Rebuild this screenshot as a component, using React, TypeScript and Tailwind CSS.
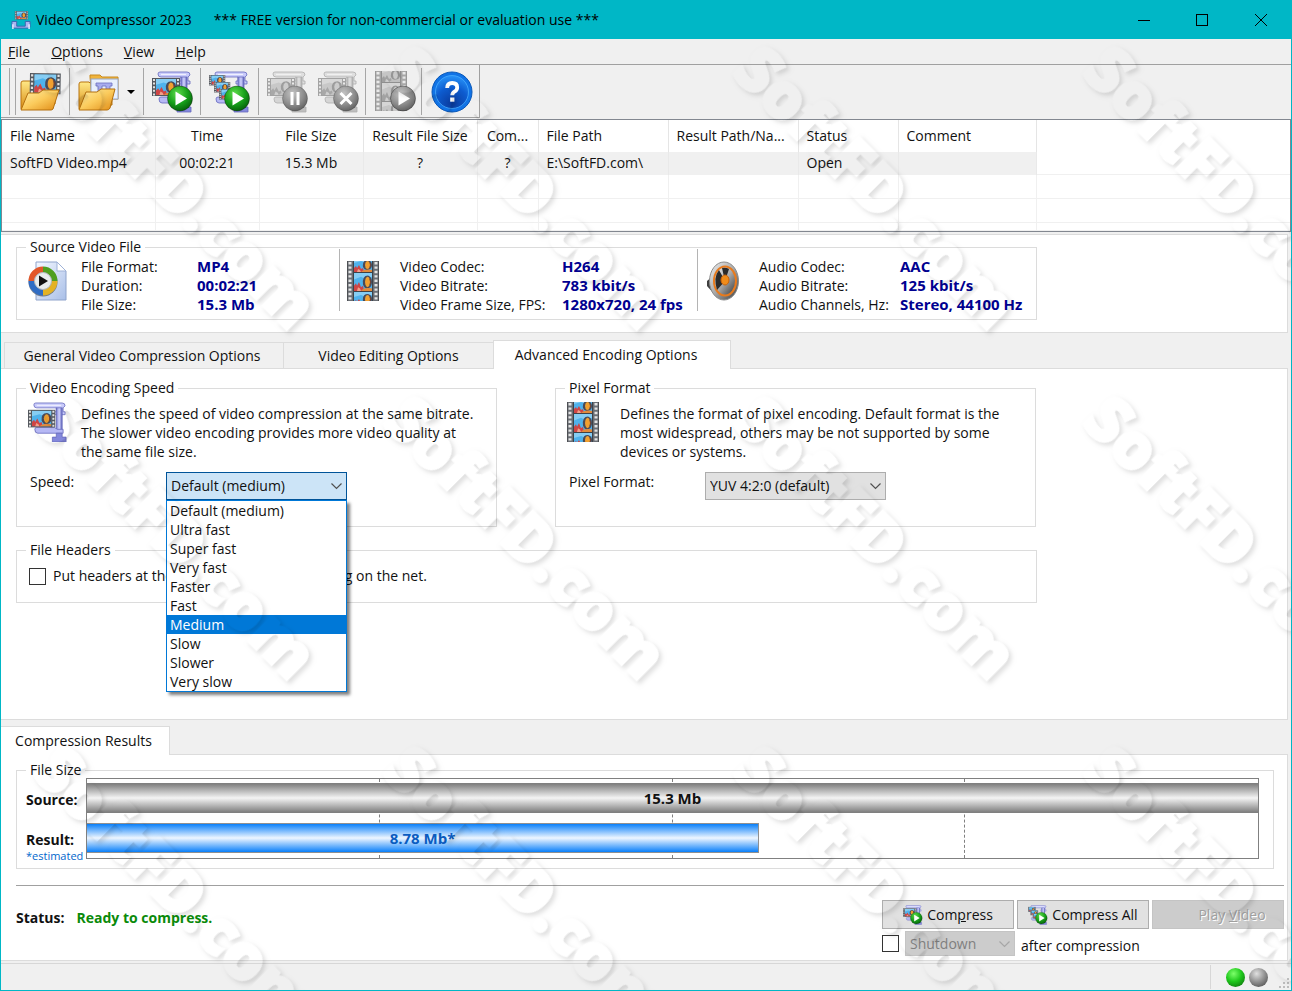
import React from 'react';

const columns = [
  { title: 'File Name', value: 'SoftFD Video.mp4', width: 'w-[153px]', align: 'text-left' },
  { title: 'Time', value: '00:02:21', width: 'w-[104px]', align: 'text-center' },
  { title: 'File Size', value: '15.3 Mb', width: 'w-[104px]', align: 'text-center' },
  { title: 'Result File Size', value: '?', width: 'w-[114px]', align: 'text-center' },
  { title: 'Com...', value: '?', width: 'w-[61px]', align: 'text-center' },
  { title: 'File Path', value: 'E:\\SoftFD.com\\', width: 'w-[130px]', align: 'text-left' },
  { title: 'Result Path/Na...', value: '', width: 'w-[130px]', align: 'text-left' },
  { title: 'Status', value: 'Open', width: 'w-[100px]', align: 'text-left' },
  { title: 'Comment', value: '', width: 'w-[138px]', align: 'text-left' },
];

const speeds = [
  'Default (medium)',
  'Ultra fast',
  'Super fast',
  'Very fast',
  'Faster',
  'Fast',
  'Medium',
  'Slow',
  'Slower',
  'Very slow',
];

const emptyRows = ['h-6', 'h-6', 'h-2'];

// shared gradients for all icons
const IconDefs: React.FC = () => (
  <svg className="absolute w-0 h-0" aria-hidden="true">
    <defs>
      <linearGradient id="folder" x1="0" y1="0" x2="1" y2="1">
        <stop offset="0" stopColor="#fff0a8" />
        <stop offset="0.5" stopColor="#fbcb5c" />
        <stop offset="1" stopColor="#e08a14" />
      </linearGradient>
      <linearGradient id="folderBack" x1="0" y1="0" x2="0" y2="1">
        <stop offset="0" stopColor="#ffe987" />
        <stop offset="1" stopColor="#d98b12" />
      </linearGradient>
      <radialGradient id="greenBall" cx="0.4" cy="0.3" r="0.75">
        <stop offset="0" stopColor="#5fdc4b" />
        <stop offset="0.55" stopColor="#17a01a" />
        <stop offset="1" stopColor="#045c08" />
      </radialGradient>
      <radialGradient id="grayBall" cx="0.4" cy="0.3" r="0.75">
        <stop offset="0" stopColor="#c4c4c4" />
        <stop offset="0.6" stopColor="#8c8c8c" />
        <stop offset="1" stopColor="#5c5c5c" />
      </radialGradient>
      <radialGradient id="blueBall" cx="0.5" cy="0.85" r="0.9">
        <stop offset="0" stopColor="#0a3a9c" />
        <stop offset="0.55" stopColor="#0d5cd0" />
        <stop offset="1" stopColor="#2b9bff" />
      </radialGradient>
      <linearGradient id="clamp" x1="0" y1="0" x2="1" y2="0">
        <stop offset="0" stopColor="#7478cc" />
        <stop offset="0.5" stopColor="#d4d6ff" />
        <stop offset="1" stopColor="#5c60b8" />
      </linearGradient>
      <linearGradient id="page" x1="0" y1="0" x2="1" y2="1">
        <stop offset="0" stopColor="#f4f8ff" />
        <stop offset="1" stopColor="#a9bfe8" />
      </linearGradient>
      <linearGradient id="metal" x1="0" y1="0" x2="1" y2="1">
        <stop offset="0" stopColor="#f2f2f2" />
        <stop offset="0.5" stopColor="#a8a8a8" />
        <stop offset="1" stopColor="#3c3c3c" />
      </linearGradient>
    </defs>
  </svg>
);

// 18x14 picture of the balloon and the rocks
const Picture: React.FC = () => (
  <g>
    <rect width="18" height="14" fill="#4fb2ec" />
    <path d="M0 0h18v3l-6 2-5-2-7 2z" fill="#86cdf3" />
    <path d="M0 14V10l2-2 1 2 2-3 2 4 2-1 1 4z" fill="#cf4545" />
    <path d="M3 14l1-3 2 1 1 2z" fill="#f0a08a" />
    <path d="M9 9q-1-7 5-7 4 1 4 5t-4 5q-3 1-5-3z" fill="#4a4a58" />
    <path d="M13 3q3 0 3 4t-3 4q-2-1-2-4t2-4z" fill="#f0a030" />
    <path d="M15 4q2 3 0 6 2-1 2-3t-2-3z" fill="#7a4430" />
    <path d="M7 14c2-2 5-3 11-2v2z" fill="#e08a3c" />
  </g>
);

const FilmStrip: React.FC = () => (
  <g>
    <rect width="32" height="40" fill="#6a6e74" />
    <path d="M3 1v39M29 1v39" stroke="#e4e4e4" strokeWidth="3" strokeDasharray="2.4 2" />
    <rect x="0" width="1" height="40" fill="#4e5054" />
    <rect x="31" width="1" height="40" fill="#4e5054" />
    <rect x="6" y="0" width="20" height="40" fill="#3e4248" />
    <svg x="7" y="0" width="18" height="11" viewBox="0 3 18 11"><Picture /></svg>
    <svg x="7" y="12" width="18" height="18" viewBox="0 0 18 14" preserveAspectRatio="none"><Picture /></svg>
    <svg x="7" y="31" width="18" height="9" viewBox="0 0 18 9"><Picture /></svg>
  </g>
);

const WideFrame: React.FC = () => (
  <g>
    <rect width="28" height="18" fill="#54585e" />
    <path d="M2 1v17M26 1v17" stroke="#e2e2e2" strokeWidth="2" strokeDasharray="2 1.6" />
    <svg x="4" y="1" width="20" height="16" viewBox="0 0 18 14" preserveAspectRatio="none"><Picture /></svg>
  </g>
);

const Clamp: React.FC = () => (
  <g stroke="#6468bc" strokeWidth="0.8">
    <path d="M6 3q0-2 2-2h27q3 0 3 3l-2 2v4h2v3H27v-3h2V6H9Q6 6 6 3z" fill="#c9cbfb" />
    <rect x="29" y="6" width="6" height="24" fill="url(#clamp)" />
    <path d="M7 28q0-2 2-2h18l3 2h6v4H10q-3 0-3-4z" fill="#b6b8f4" />
    <path d="M29 32h6v4h4v5H25v-5h4z" fill="#8488dc" />
    <path d="M9 3.4h25" stroke="#fff" />
  </g>
);

const FilmStripIcon: React.FC = () => (
  <svg width="32" height="40" viewBox="0 0 32 40" aria-hidden="true"><FilmStrip /></svg>
);

const ClampIcon: React.FC = () => (
  <svg width="40" height="40" viewBox="0 0 41 41" aria-hidden="true">
    <Clamp />
    <g transform="translate(0 8)"><WideFrame /></g>
  </svg>
);

const PlayBadge: React.FC<{ fill?: string }> = ({ fill = 'url(#greenBall)' }) => (
  <g>
    <circle cx="28" cy="27.5" r="12.5" fill={fill} stroke="#00000055" />
    <path d="M23.5 20.5v14L35 27.5z" fill="#fff" />
  </g>
);

const OpenFileIcon: React.FC = () => (
  <svg width="42" height="40" viewBox="0 0 42 40" aria-hidden="true">
    <path d="M1 37V11q0-2 2-2h8l2 3h22v20z" fill="url(#folderBack)" stroke="#b87410" />
    <g transform="translate(10 1) rotate(1) scale(1.1 1.15)"><WideFrame /></g>
    <path d="M1 38l7-17h11l4-3h16l-6 19q-1 1-2 1z" fill="url(#folder)" stroke="#b4700e" />
  </svg>
);

const OpenFolderIcon: React.FC = () => (
  <svg width="42" height="40" viewBox="0 0 42 40" aria-hidden="true">
    <path d="M1 37V12q0-2 2-2h8l3 3h20v20z" fill="url(#folderBack)" stroke="#b87410" />
    <path d="M12 5V3h10l2 2h16v22H14z" fill="#f0b43c" stroke="#c98a1c" />
    <rect x="13" y="7" width="27" height="20" fill="#e8f0fd" stroke="#94a8cc" />
    <path d="M18 11h16v3h-2v7h-4v-7h-4v6h-4v-6h-2z" fill="#a8acee" stroke="#6a6ec0" strokeWidth="0.8" />
    <path d="M1 38l7-18h11l4-3h14l-5 19q-1 2-3 2z" fill="url(#folder)" stroke="#b4700e" />
  </svg>
);

const CompressIcon: React.FC<{ size?: number }> = ({ size = 42 }) => (
  <svg width={size} height={size} viewBox="0 0 42 42" aria-hidden="true">
    <Clamp />
    <g transform="translate(0 7)"><WideFrame /></g>
    <PlayBadge />
  </svg>
);

const CompressAllIcon: React.FC<{ size?: number }> = ({ size = 42 }) => (
  <svg width={size} height={size} viewBox="0 0 42 42" aria-hidden="true">
    <Clamp />
    <g transform="translate(0 4) scale(.58)"><WideFrame /></g>
    <g transform="translate(5 11) scale(.58)"><WideFrame /></g>
    <g transform="translate(10 18) scale(.58)"><WideFrame /></g>
    <PlayBadge />
  </svg>
);

const GrayClamp: React.FC<{ children: React.ReactNode }> = ({ children }) => (
  <svg width="42" height="42" viewBox="0 0 42 42" aria-hidden="true" className="grayscale">
    <g opacity="0.5">
      <Clamp />
      <g transform="translate(0 7)"><WideFrame /></g>
    </g>
    <circle cx="28" cy="27.5" r="12.5" fill="url(#grayBall)" stroke="#00000033" />
    {children}
  </svg>
);

const PauseIcon: React.FC = () => (
  <GrayClamp>
    <path d="M25 21v13M31 21v13" stroke="#fff" strokeWidth="3" />
  </GrayClamp>
);

const StopIcon: React.FC = () => (
  <GrayClamp>
    <path d="M22.5 22l11 11m0-11l-11 11" stroke="#fff" strokeWidth="3" />
  </GrayClamp>
);

const PlayFilmIcon: React.FC = () => (
  <svg width="42" height="42" viewBox="0 0 42 42" aria-hidden="true" className="grayscale">
    <g opacity="0.55"><FilmStrip /></g>
    <PlayBadge fill="url(#grayBall)" />
  </svg>
);

const HelpIcon: React.FC = () => (
  <svg width="42" height="42" viewBox="0 0 42 42" aria-hidden="true">
    <circle cx="21" cy="21" r="20" fill="#1173e6" stroke="#0a58b8" />
    <circle cx="21" cy="21" r="16.5" fill="url(#blueBall)" stroke="#4fb0ff" strokeOpacity="0.7" />
    <path d="M16.2 17q0-5 5-5t5 4.4q0 2.6-2.7 4.2-2.200 1.300-2.200 3.600" fill="none" stroke="#fff" strokeWidth="3.8" />
    <rect x="19.2" y="26.5" width="4.2" height="4.2" fill="#fff" />
  </svg>
);

const MediaFileIcon: React.FC = () => (
  <svg width="40" height="40" viewBox="0 0 40 40" aria-hidden="true">
    <path d="M8 1h21l9 9v29H8z" fill="url(#page)" stroke="#8fa4cc" />
    <path d="M29 1v9h9z" fill="#fff" stroke="#9fb2d8" />
    <circle cx="15" cy="21" r="14.5" fill="#4b5563" opacity="0.7" />
    <g fill="none" strokeWidth="6">
      <path d="M3.5 20A11.5 11.5 0 0 1 15 8.5" stroke="#e2572a" />
      <path d="M15 8.5A11.5 11.5 0 0 1 26.5 20" stroke="#4f9f1f" />
      <path d="M26.5 20A11.5 11.5 0 0 1 15 31.5" stroke="#e3b224" />
      <path d="M15 31.5A11.5 11.5 0 0 1 3.5 20" stroke="#2f6cc4" />
    </g>
    <circle cx="15" cy="20" r="8.5" fill="#e8ecee" stroke="#b4b8bc" />
    <path d="M11 14.5v11l9-5.5z" fill="#111" />
  </svg>
);

const SpeakerIcon: React.FC = () => (
  <svg width="33" height="40" viewBox="0 0 33 40" aria-hidden="true">
    <path d="M8 14L1 20v5l8 9z" fill="#3f3f3f" />
    <ellipse cx="18" cy="20" rx="14.5" ry="19" fill="url(#metal)" stroke="#8c8c8c" />
    <ellipse cx="19" cy="20" rx="12" ry="15.5" fill="#e87a1c" />
    <ellipse cx="19" cy="20" rx="10" ry="13.5" fill="url(#metal)" />
    <path d="M19 20L13 9Q7 16 11 29zM19 20l-3-13q4-1 7 1z" fill="#2b2b2b" />
    <ellipse cx="19" cy="19" rx="4" ry="5" fill="#f08c1a" stroke="#c96208" />
  </svg>
);

const Chevron: React.FC<{ color?: string }> = ({ color = '#505050' }) => (
  <svg className="absolute right-1 top-1/2 -translate-y-1/2 pointer-events-none" width="13" height="8" viewBox="0 0 13 8" aria-hidden="true">
    <path d="M1.5 1.5l5 5 5-5" fill="none" stroke={color} strokeWidth="1.2" />
  </svg>
);

const Watermark: React.FC = () => (
  <svg className="absolute inset-x-0 top-[39px] w-full h-[calc(100%-39px)] pointer-events-none z-50" aria-hidden="true">
    <defs>
      <filter id="emboss" x="-10%" y="-30%" width="120%" height="170%">
        <feGaussianBlur in="SourceAlpha" stdDeviation="2" result="blur" />
        <feOffset in="blur" dx="4" dy="0" result="shadow" />
        <feComposite in="shadow" in2="SourceAlpha" operator="out" />
      </filter>
      <pattern id="tile" width="350" height="350" patternUnits="userSpaceOnUse">
        <g opacity="0.12" fontSize="63" fontWeight="800" fontFamily="Open Sans, sans-serif">
          <text transform="translate(29 34) rotate(45)" filter="url(#emboss)" stroke="#000" strokeWidth="3">
            SoftFD.com
          </text>
        </g>
      </pattern>
    </defs>
    <rect width="100%" height="100%" fill="url(#tile)" />
  </svg>
);

interface ToolButtonProps {
  label: string;
  className: string;
  disabled?: boolean;
  children: React.ReactNode;
}

const ToolButton: React.FC<ToolButtonProps> = ({ label, className, disabled, children }) => (
  <button type="button" aria-label={label} disabled={disabled} className={`flex items-center justify-center h-full pt-[2px] ${className}`}>
    {children}
  </button>
);

const Separator: React.FC = () => <div className="w-px h-[47px] bg-[#a6a6a6]" />;

interface InfoProps {
  icon: React.ReactNode;
  labels: string;
  className: string;
  rows: [string, string][];
}

const Info: React.FC<InfoProps> = ({ icon, labels, className, rows }) => (
  <div className={`flex items-start ${className}`}>
    <div className="w-[53px] pt-1">{icon}</div>
    <dl className={`grid ${labels} leading-[19px] whitespace-nowrap`}>
      {rows.map(([name, value]) => (
        <React.Fragment key={name}>
          <dt>{name}</dt>
          <dd className="font-bold text-[15px] text-[#000090]">{value}</dd>
        </React.Fragment>
      ))}
    </dl>
  </div>
);

const App: React.FC = () => {
  return (
    <div className="relative min-h-screen flex flex-col overflow-hidden bg-[#f0f0f0] border-x border-b border-[#00b7c6] text-sm leading-5 text-[#111] font-['Open_Sans',sans-serif]">
      <IconDefs />

      <header className="h-[39px] flex items-center bg-[#00b7c6] pl-[10px] text-black">
        <svg width="20" height="20" viewBox="0 0 42 42" aria-hidden="true">
          <path d="M2 24h10v10h18V24h10v12l-4 2H6l-4-2z" fill="#a9b6f0" stroke="#3c62b0" strokeWidth="2" />
          <g transform="translate(8 2)"><WideFrame /></g>
          <path d="M4 30v10M38 30v10" stroke="#e8ecff" strokeWidth="3" />
        </svg>
        <h1 className="flex-1 pl-[5px] flex gap-[22px] whitespace-pre">
          <span>Video Compressor 2023</span>
          <span>*** FREE version for non-commercial or evaluation use ***</span>
        </h1>
        <div className="flex pr-px">
          <button type="button" aria-label="Minimize" className="w-[58px] h-9 flex items-center justify-center">
            <svg width="12" height="12"><path d="M0 6.5h12" stroke="#000" /></svg>
          </button>
          <button type="button" aria-label="Maximize" className="w-[58px] h-9 flex items-center justify-center">
            <svg width="12" height="12"><rect x="0.5" y="0.5" width="11" height="11" fill="none" stroke="#000" /></svg>
          </button>
          <button type="button" aria-label="Close" className="w-[59px] h-9 flex items-center justify-center">
            <svg width="12" height="12"><path d="M0 0l12 12M12 0L0 12" stroke="#000" /></svg>
          </button>
        </div>
      </header>

      <nav className="h-[26px] flex items-center gap-[21px] pl-[7px] border-b border-[#a0a0a0]">
        <button type="button"><u>F</u>ile</button>
        <button type="button"><u>O</u>ptions</button>
        <button type="button"><u>V</u>iew</button>
        <button type="button"><u>H</u>elp</button>
      </nav>

      <div className="h-[54px] flex">
        <div className="h-[53px] flex items-center pl-2 border-b border-r border-[#a0a0a0]">
          <div className="w-[7px] h-[47px] border-x border-[#a6a6a6]" />
          <ToolButton label="Open file" className="w-[53px] pr-1"><OpenFileIcon /></ToolButton>
          <Separator />
          <ToolButton label="Open folder" className="w-[73px] gap-[7px]">
            <OpenFolderIcon />
            <svg width="8" height="4" aria-hidden="true"><path d="M0 0h8L4 4z" /></svg>
          </ToolButton>
          <Separator />
          <ToolButton label="Compress" className="w-14 pl-[2px]"><CompressIcon /></ToolButton>
          <Separator />
          <ToolButton label="Compress all" className="w-[57px]"><CompressAllIcon /></ToolButton>
          <Separator />
          <ToolButton label="Pause" className="w-[53px] pl-1" disabled><PauseIcon /></ToolButton>
          <ToolButton label="Stop" className="w-[53px]" disabled><StopIcon /></ToolButton>
          <Separator />
          <ToolButton label="Play" className="w-[55px] pl-1" disabled><PlayFilmIcon /></ToolButton>
          <Separator />
          <ToolButton label="Help" className="w-[57px] pl-[2px]"><HelpIcon /></ToolButton>
        </div>
      </div>

      <div className="h-[113px] bg-white border border-[#828790] overflow-hidden">
        <table className="w-full table-fixed border-collapse">
          <thead>
            <tr className="h-8">
              {columns.map((col) => (
                <th key={col.title} scope="col" className={`${col.width} ${col.align} px-2 font-normal border-r border-[#e5e5e5] whitespace-nowrap overflow-hidden`}>
                  {col.title}
                </th>
              ))}
              <td />
            </tr>
          </thead>
          <tbody>
            <tr className="h-[22px] border-b border-[#f0f0f0]">
              {columns.map((col) => (
                <td key={col.title} className={`${col.align} px-2 bg-[#f0f0f0] border-r border-[#e9e9e9] whitespace-nowrap`}>
                  {col.value}
                </td>
              ))}
              <td />
            </tr>
            {emptyRows.map((height, index) => (
              <tr key={index} className={`${height} border-b border-[#f0f0f0]`}>
                {columns.map((col) => (
                  <td key={col.title} className="border-r border-[#f0f0f0]" />
                ))}
                <td />
              </tr>
            ))}
          </tbody>
        </table>
      </div>

      <section className="mt-[2px] mr-[3px] h-[99px] bg-white border-y border-r border-[#dcdcdc] pl-[15px] pt-[2px]">
        <fieldset className="w-[1021px] h-[83px] border border-[#dcdcdc]">
          <legend className="ml-[9px] px-1">Source Video File</legend>
          <div className="flex">
            <Info
              className="w-[322px] pl-[11px]"
              labels="grid-cols-[116px_auto]"
              icon={<MediaFileIcon />}
              rows={[['File Format:', 'MP4'], ['Duration:', '00:02:21'], ['File Size:', '15.3 Mb']]}
            />
            <div className="w-px h-[62px] -mt-2 bg-[#b4b4b4]" />
            <Info
              className="w-[357px] pl-[7px]"
              labels="grid-cols-[162px_auto]"
              icon={<FilmStripIcon />}
              rows={[['Video Codec:', 'H264'], ['Video Bitrate:', '783 kbit/s'], ['Video Frame Size, FPS:', '1280x720, 24 fps']]}
            />
            <div className="w-px h-[62px] -mt-2 bg-[#b4b4b4]" />
            <Info
              className="pl-2"
              labels="grid-cols-[141px_auto]"
              icon={<SpeakerIcon />}
              rows={[['Audio Codec:', 'AAC'], ['Audio Bitrate:', '125 kbit/s'], ['Audio Channels, Hz:', 'Stereo, 44100 Hz']]}
            />
          </div>
        </fieldset>
      </section>

      <div role="tablist" className="mt-[7px] mr-[3px] h-[29px] flex items-end pl-[3px] border-b border-[#dcdcdc]">
        <button type="button" role="tab" aria-selected="false" className="w-[280px] h-[26px] pr-1 border border-b-0 border-[#dcdcdc]">
          General Video Compression Options
        </button>
        <button type="button" role="tab" aria-selected="false" className="w-[209px] h-[26px] border-t border-[#dcdcdc]">
          Video Editing Options
        </button>
        <button type="button" role="tab" aria-selected="true" className="w-[238px] h-[29px] -mb-px pr-3 bg-white border border-b-0 border-[#dcdcdc]">
          Advanced Encoding Options
        </button>
      </div>

      <main className="mr-[3px] flex-1 bg-white border-b border-r border-[#dcdcdc] pl-[15px] pt-[9px]">
        <div className="flex gap-[58px]">
          <fieldset className="w-[481px] h-[149px] pl-[11px] border border-[#dcdcdc]">
            <legend className="-ml-[2px] px-1">Video Encoding Speed</legend>
            <div className="flex pt-1">
              <div className="w-[53px] h-[41px]"><ClampIcon /></div>
              <p className="pt-[2px] leading-[19px] whitespace-nowrap">
                Defines the speed of video compression at the same bitrate.<br />
                The slower video encoding provides more video quality at<br />
                the same file size.
              </p>
            </div>
            <div className="flex pt-[11px]">
              <label htmlFor="speed" className="w-[138px] pl-[2px]">Speed:</label>
              <div className="relative w-[181px]">
                <select id="speed" defaultValue="Default (medium)" className="appearance-none w-full h-7 pl-1 bg-[#cce4f7] border border-[#005499]">
                  {speeds.map((speed) => (
                    <option key={speed}>{speed}</option>
                  ))}
                </select>
                <Chevron />
                <ul role="listbox" aria-label="Speed" className="absolute top-7 left-0 z-10 w-full bg-white border border-[#0078d7] leading-[19px] shadow-[3px_3px_3px_rgba(0,0,0,0.5)]">
                  {speeds.map((speed) => (
                    <li
                      key={speed}
                      role="option"
                      aria-selected={speed === 'Medium'}
                      className={speed === 'Medium' ? 'pl-[3px] bg-[#0078d7] text-white' : 'pl-[3px]'}
                    >
                      {speed}
                    </li>
                  ))}
                </ul>
              </div>
            </div>
          </fieldset>

          <fieldset className="w-[481px] h-[149px] pl-[11px] border border-[#dcdcdc]">
            <legend className="-ml-[2px] px-1">Pixel Format</legend>
            <div className="flex pt-1">
              <div className="w-[53px] h-[41px]"><FilmStripIcon /></div>
              <p className="pt-[2px] leading-[19px] whitespace-nowrap">
                Defines the format of pixel encoding. Default format is the<br />
                most widespread, others may be not supported by some<br />
                devices or systems.
              </p>
            </div>
            <div className="flex pt-[11px]">
              <label htmlFor="pixel-format" className="w-[138px] pl-[2px]">Pixel Format:</label>
              <div className="relative w-[181px]">
                <select id="pixel-format" className="appearance-none w-full h-7 pl-1 bg-[#e1e1e1] border border-[#adadad]">
                  <option>YUV 4:2:0 (default)</option>
                </select>
                <Chevron />
              </div>
            </div>
          </fieldset>
        </div>

        <fieldset className="mt-[13px] w-[1021px] h-[63px] pl-3 border border-[#dcdcdc]">
          <legend className="-ml-[3px] px-1">File Headers</legend>
          <label className="flex items-center gap-[7px] pt-[6px]">
            <input type="checkbox" className="appearance-none w-[17px] h-[17px] bg-white border border-[#333]" />
            Put headers at the beginning for quick playing on the net.
          </label>
        </fieldset>
      </main>

      <div role="tablist" className="mt-[6px] mr-[3px] h-[29px] flex border-b border-[#dcdcdc]">
        <button type="button" role="tab" aria-selected="true" className="w-[169px] h-[29px] -mb-px pr-[3px] bg-white border-t border-r border-[#dcdcdc]">
          Compression Results
        </button>
      </div>

      <section className="mr-[3px] h-[206px] bg-white border-b border-r border-[#dcdcdc] pl-[15px] pr-[3px] pt-[5px]">
        <fieldset className="mr-[10px] h-[109px] pl-[9px] pr-[14px] border border-[#dcdcdc]">
          <legend className="px-1">File Size</legend>
          <div className="flex -mt-[2px]">
            <div className="w-[60px] font-bold">
              <div className="pt-3">Source:</div>
              <div className="pt-5">Result:</div>
              <div className="text-[11px] leading-3 font-normal text-[#0066cc]">*estimated</div>
            </div>
            <div className="relative flex-1 h-[81px] border border-[#808080] pt-1">
              <div className="absolute inset-0 grid grid-cols-4">
                <div className="border-r border-dashed border-[#808080]" />
                <div className="border-r border-dashed border-[#808080]" />
                <div className="border-r border-dashed border-[#808080]" />
              </div>
              <div className="relative h-[30px] flex items-center justify-center font-bold text-[15px] border-y border-[#808080] bg-[linear-gradient(#808080,#f4f4f4_50%,#808080)]">
                15.3 Mb
              </div>
              <div
                className="relative mt-[10px] h-[30px] flex items-center justify-center font-bold text-[15px] text-[#0a5cc0] border border-l-0 border-[#909090] bg-[linear-gradient(#0a80fa,#eef6ff_50%,#0a80fa)]"
                style={{ width: `${(8.78 / 15.3) * 100}%` }}
              >
                8.78 Mb*
              </div>
            </div>
          </div>
        </fieldset>

        <hr className="mt-4 border-t border-[#a0a0a0]" />

        <div className="flex justify-between pt-[14px] whitespace-nowrap">
          <div className="flex gap-3 pt-2 font-bold">
            <span>Status:</span>
            <span className="text-[#0a8a0a]">Ready to compress.</span>
          </div>
          <div className="flex flex-col gap-[2px]">
            <div className="flex gap-[3px]">
              <button type="button" className="w-[132px] h-[29px] flex items-center justify-center gap-1 bg-[#e1e1e1] border border-[#adadad]">
                <CompressIcon size={20} />
                <span>Com<u>p</u>ress</span>
              </button>
              <button type="button" className="w-[132px] h-[29px] flex items-center justify-center gap-1 bg-[#e1e1e1] border border-[#adadad]">
                <CompressAllIcon size={20} />
                <span>Compress All</span>
              </button>
              <button type="button" disabled className="w-[132px] h-[29px] pl-7 bg-[#cccccc] border border-[#c4c4c4] text-[#a0a0a0] [text-shadow:1px_1px_0_#fff]">
                Play <u>V</u>ideo
              </button>
            </div>
            <div className="flex items-center">
              <input type="checkbox" id="after" className="appearance-none w-[17px] h-[17px] bg-white border border-[#333]" />
              <div className="relative ml-[6px] w-[110px]">
                <select disabled aria-label="Action" className="appearance-none block w-full h-[25px] pl-1 bg-[#cccccc] border border-[#c4c4c4] text-[#808080] opacity-100">
                  <option>Shutdown</option>
                </select>
                <Chevron color="#a6a6a6" />
              </div>
              <label htmlFor="after" className="pl-[6px] pt-1">after compression</label>
            </div>
          </div>
        </div>
      </section>

      <footer className="mt-[2px] h-[27px] flex justify-end items-center border-t border-[#d7d7d7]">
        <div className="h-6 flex items-center gap-1 pl-[15px] pr-6 border-l border-[#d7d7d7]">
          <div className="w-[19px] h-[19px] rounded-full bg-[radial-gradient(circle_at_40%_30%,#7dff6a,#1fc81c_45%,#0a5c0a)]" />
          <div className="w-[19px] h-[19px] rounded-full bg-[radial-gradient(circle_at_40%_30%,#e0e0e0,#959595_45%,#3c3c3c)]" />
        </div>
        <svg className="-ml-[13px] mt-3" width="12" height="12" aria-hidden="true">
          <path d="M8 1h2v2h-2zM4 5h2v2h-2zM8 5h2v2h-2zM0 9h2v2h-2zM4 9h2v2h-2zM8 9h2v2h-2z" fill="#bdbdbd" />
        </svg>
      </footer>

      <Watermark />
    </div>
  );
};

export default App;
